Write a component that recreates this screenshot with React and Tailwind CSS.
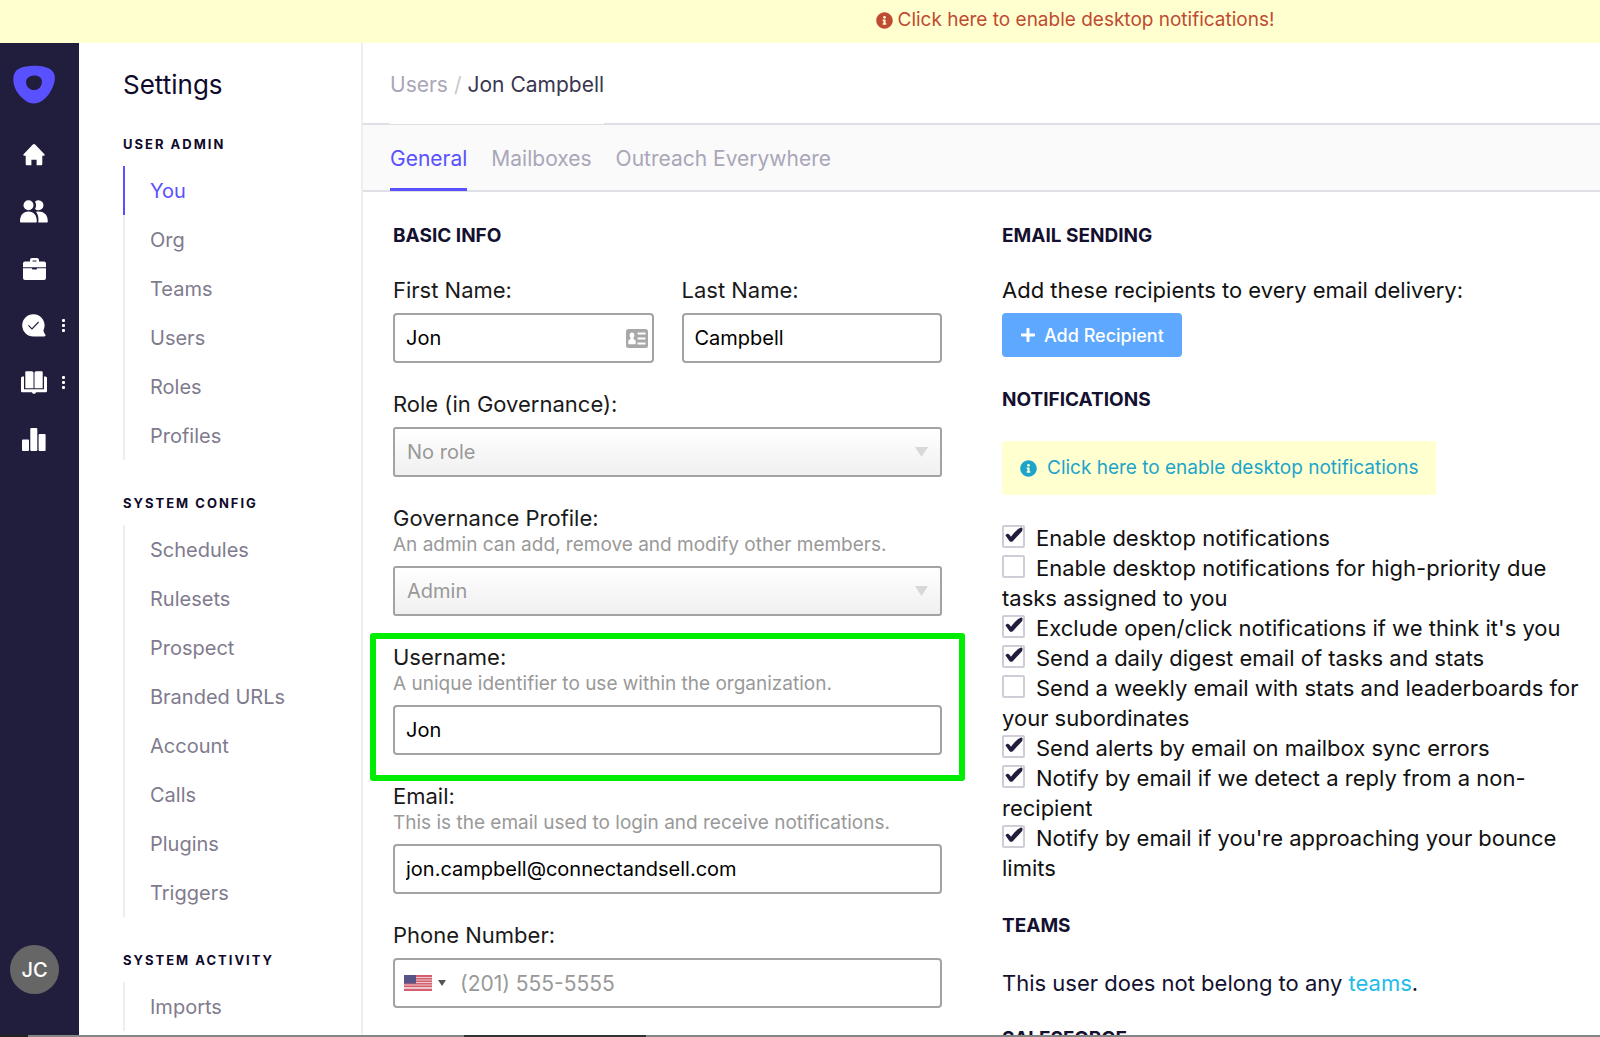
import { useState } from 'react';
import { FaInfoCircle, FaPlus } from 'react-icons/fa';

const navSections = [
  { title: 'User Admin', items: ['You', 'Org', 'Teams', 'Users', 'Roles', 'Profiles'] },
  {
    title: 'System Config',
    items: ['Schedules', 'Rulesets', 'Prospect', 'Branded URLs', 'Account', 'Calls', 'Plugins', 'Triggers'],
  },
  { title: 'System Activity', items: ['Imports'] },
];

const tabs = ['General', 'Mailboxes', 'Outreach Everywhere'];

const notificationOptions = [
  { id: 'desktop', label: 'Enable desktop notifications', on: true },
  { id: 'high-priority', label: 'Enable desktop notifications for high-priority due tasks assigned to you', on: false },
  { id: 'exclude-own', label: "Exclude open/click notifications if we think it's you", on: true },
  { id: 'daily', label: 'Send a daily digest email of tasks and stats', on: true },
  { id: 'weekly', label: 'Send a weekly email with stats and leaderboards for your subordinates', on: false },
  { id: 'sync-errors', label: 'Send alerts by email on mailbox sync errors', on: true },
  { id: 'non-recipient', label: 'Notify by email if we detect a reply from a non-recipient', on: true },
  { id: 'bounce', label: "Notify by email if you're approaching your bounce limits", on: true },
];

const inputClass =
  'block w-full h-[50px] rounded-[4px] border-2 border-[#a3a3a3] bg-white px-[11px] text-[20px] text-black focus:outline-none focus:border-[#5951ff]';

// Rail icons
const HomeIcon = () => (
  <svg width="22" height="22" viewBox="0 0 22 22" fill="#fff" aria-hidden="true">
    <path d="M9.6.8a2 2 0 0 1 2.8 0l8.8 9.1c.9 1 .5 1.9-.6 1.9h-1.3v8c0 1-.6 1.500-1.500 1.500h-4.200v-5.500H8.400v5.500H4.200c-.9 0-1.500-.5-1.500-1.500v-8H1.400c-1.100 0-1.500-.9-.6-1.900z" />
  </svg>
);

const PeopleIcon = () => (
  <svg width="28" height="23" viewBox="0 0 28 23" fill="#fff" aria-hidden="true">
    <circle cx="8.500" cy="5.300" r="5" />
    <path d="M0 21.300c0-6 3.200-9.800 8.500-9.800s8.300 3.800 8.300 9.800c0 .8-.4 1.200-1.100 1.200H1.100C.4 22.500 0 22.100 0 21.300z" />
    <path d="M15 1.700a5 5 0 1 1 0 7.200 7 7 0 0 0 0-7.200z" />
    <path d="M16 11.700c7-1 11.800 2.300 11.800 9.600 0 .8-.4 1.200-1.100 1.200h-8.400c.6-4.300-.1-8-2.300-10.800z" />
  </svg>
);

const BriefcaseIcon = () => (
  <svg width="23" height="22" viewBox="0 0 23 22" fill="#fff" aria-hidden="true">
    <path d="M7 3.500V2a2 2 0 0 1 2-2h5a2 2 0 0 1 2 2v1.500h5a2 2 0 0 1 2 2v3.800H0V5.500a2 2 0 0 1 2-2zm2.500 0h4V2.400h-4z" />
    <path d="M0 10.300h9v.5c0 .5.3.8.8.8h3.400c.5 0 .8-.3.8-.8v-.5h9V20a2 2 0 0 1-2 2H2a2 2 0 0 1-2-2z" />
  </svg>
);

const TaskIcon = () => (
  <svg width="24" height="23" viewBox="0 0 24 23" aria-hidden="true">
    <path d="M11.300.2a11.200 11.200 0 0 1 10.100 16.200c.3 1.600 1 2.800 1.900 4 .6.900.2 2-1 2H11.300a11.100 11.100 0 1 1 0-22.200z" fill="#fff" />
    <path d="M6.400 11.400l3.600 3.600 6.600-7" fill="none" stroke="#211d3c" strokeWidth="1.100" />
  </svg>
);

const BookIcon = () => (
  <svg width="26" height="23" viewBox="0 0 26 23" fill="#fff" aria-hidden="true">
    <path d="M0 7a1.500 1.500 0 0 1 1.500-1.500H3v12.800h20V5.500h1.500A1.500 1.500 0 0 1 26 7v13a1.200 1.200 0 0 1-1.200 1.200H15c-.3 1-1 1.600-2 1.600s-1.700-.6-2-1.600H1.200A1.200 1.200 0 0 1 0 20z" />
    <path d="M4.300 1.200Q4.300.3 5.200.3h5.600q1.700 0 1.700 1.500v15.400H4.300z" />
    <path d="M13.500 1.800q0-1.500 1.700-1.500h5.600q.9 0 .9.900v16h-8.200z" />
  </svg>
);

const ChartIcon = () => (
  <svg width="24" height="23" viewBox="0 0 24 23" fill="#fff" aria-hidden="true">
    <rect x="0" y="11.500" width="7" height="11.500" rx="1" />
    <rect x="8.300" y="0" width="7" height="23" rx="1" />
    <rect x="16.600" y="6" width="7" height="17" rx="1" />
  </svg>
);

const DotsIcon = () => (
  <svg width="3" height="14" viewBox="0 0 3 14" fill="#fff" aria-hidden="true">
    <rect y="0" width="3" height="3" rx="1" />
    <rect y="5" width="3" height="3" rx="1" />
    <rect y="10" width="3" height="3" rx="1" />
  </svg>
);

const railLinks = [
  { label: 'Home', Icon: HomeIcon },
  { label: 'Prospects', Icon: PeopleIcon },
  { label: 'Accounts', Icon: BriefcaseIcon },
  { label: 'Tasks', Icon: TaskIcon, more: true },
  { label: 'Library', Icon: BookIcon, more: true },
  { label: 'Reports', Icon: ChartIcon },
];

const Rail = () => (
  <nav aria-label="Main" className="flex w-[79px] shrink-0 flex-col bg-[#211d3c] pt-[22px]">
    <a href="#home" aria-label="Outreach" className="ml-[13px] block">
      <svg width="42" height="39" viewBox="0 0 42 39" aria-hidden="true">
        <path
          fillRule="evenodd"
          fill="#5951ff"
          d="M17 1C26 .2 34 1.800 38 4.800c4 3 4.600 7.700 3.300 12.700-2.200 8.500-7.500 15.500-13.300 19-5 2.800-11 2.700-16-1.300C4.500 29.500.3 22.500.3 14.500.3 6 5 1.800 17 1zM21 10.500c-4.600.2-7.900 2.700-7.900 6.700 0 4.500 3.600 7.800 7.900 7.800 4.500 0 7.900-3.500 7.900-8.300 0-4-3.200-6.400-7.900-6.200z"
        />
      </svg>
    </a>
    <ul className="mt-[22px] flex flex-col">
      {railLinks.map(({ label, Icon, more }) => (
        <li key={label}>
          <a href={`#${label.toLowerCase()}`} aria-label={label} className="flex h-[57px] items-center">
            <span className="flex w-[68px] justify-center">
              <Icon />
            </span>
            {more && <span className="absolute ml-[62px]"><DotsIcon /></span>}
          </a>
        </li>
      ))}
    </ul>
    <button
      type="button"
      className="mt-auto mb-[41px] ml-[10px] size-[49px] rounded-full bg-[#666] text-[20px] font-medium text-white"
    >
      JC
    </button>
  </nav>
);

const SettingsNav = () => (
  <aside className="w-[284px] shrink-0 overflow-hidden border-r-2 border-[#eee] pl-11">
    <h1 className="mt-[25px] text-[26px] leading-[34px] text-[#0f0a2b]">Settings</h1>
    {navSections.map((section, i) => (
      <section key={section.title} className={i === 0 ? 'mt-[30px]' : 'mt-[31px]'}>
        <h2 className="h-[34px] text-[13px] leading-[24px] font-bold tracking-[2px] text-[#0f0a2b] uppercase">
          {section.title}
        </h2>
        <ul>
          {section.items.map((item) => (
            <li key={item}>
              <a
                href={`#${item.toLowerCase().replace(' ', '-')}`}
                className={`flex h-[49px] items-center border-l-2 pt-px pl-[25px] text-[20px] ${
                  item === 'You' ? 'border-[#5951ff] text-[#5951ff]' : 'border-[#eee] text-[#7f7b8e]'
                }`}
              >
                {item}
              </a>
            </li>
          ))}
        </ul>
      </section>
    ))}
  </aside>
);

const Field = ({ id, label, help, highlight, children }) => (
  <div className="relative mb-[27px]">
    <label htmlFor={id} className="block text-[22px] leading-[28px] text-[#1a1a1a]">
      {label}
    </label>
    {help && <p className="text-[19px] leading-[25px] text-[#999]">{help}</p>}
    <div className="relative mt-[9px]">{children}</div>
    {highlight && (
      <div className="pointer-events-none absolute -inset-x-[23px] -top-[10px] -bottom-[26px] rounded-[3px] border-[6px] border-[#00ec00]" />
    )}
  </div>
);

const DisabledSelect = ({ id, value }) => (
  <>
    <select
      id={id}
      disabled
      className="block h-[50px] w-full appearance-none rounded-[3px] border-2 border-[#a3a3a3] bg-linear-to-b from-white to-[#f0f0f0] px-3 text-[20px] text-[#999] opacity-100"
    >
      <option>{value}</option>
    </select>
    <svg className="absolute top-5 right-[14px]" width="13" height="10" viewBox="0 0 13 10" aria-hidden="true">
      <path d="M0 0h13L6.500 10z" fill="#d8d8d8" />
    </svg>
  </>
);

const ContactCardIcon = () => (
  <svg className="absolute top-4 right-[6px]" width="22" height="19" viewBox="0 0 22 19" aria-hidden="true">
    <rect width="22" height="19" rx="2.500" fill="#a8a8a8" />
    <g fill="#fff">
      <path d="M6 3.500c1.500 0 2.400 1.100 2.400 2.700 0 1-.4 2-1 2.500v1.200c1.400.5 2.300 1 2.300 2.600v2.700H2.300v-2.700c0-1.600.9-2.100 2.300-2.600V8.700c-.6-.5-1-1.500-1-2.500 0-1.600.9-2.700 2.400-2.700z" />
      <rect x="11.500" y="3.500" width="8" height="2" />
      <rect x="11.500" y="8.500" width="8" height="2" />
      <rect x="11.500" y="13.500" width="8" height="2" />
    </g>
  </svg>
);

const UsFlag = () => (
  <svg width="28" height="16" viewBox="0 0 28 16" aria-hidden="true">
    <rect width="28" height="16" fill="#efc6cc" />
    <g fill="#d4606f">
      <rect width="28" height="2" />
      <rect y="3" width="28" height="1.500" />
      <rect y="5.500" width="28" height="1.500" />
      <rect y="8" width="28" height="1.500" />
      <rect y="10.500" width="28" height="1.500" />
      <rect y="14" width="28" height="2" />
    </g>
    <rect width="12" height="8.500" fill="#575487" />
  </svg>
);

const SectionTitle = ({ children }) => (
  <h3 className="text-[19px] leading-[28px] font-bold text-[#14102f] uppercase">{children}</h3>
);

const BasicInfo = () => (
  <form className="w-[549px] shrink-0" onSubmit={(e) => e.preventDefault()}>
    <SectionTitle>Basic Info</SectionTitle>
    <div className="mt-[26px] grid grid-cols-2 gap-x-7">
      <Field id="first-name" label="First Name:">
        <input id="first-name" type="text" defaultValue="Jon" className={inputClass} />
        <ContactCardIcon />
      </Field>
      <Field id="last-name" label="Last Name:">
        <input id="last-name" type="text" defaultValue="Campbell" className={inputClass} />
      </Field>
    </div>
    <Field id="role" label="Role (in Governance):">
      <DisabledSelect id="role" value="No role" />
    </Field>
    <Field id="profile" label="Governance Profile:" help="An admin can add, remove and modify other members.">
      <DisabledSelect id="profile" value="Admin" />
    </Field>
    <Field id="username" label="Username:" help="A unique identifier to use within the organization." highlight>
      <input id="username" type="text" defaultValue="Jon" className={inputClass} />
    </Field>
    <Field id="email" label="Email:" help="This is the email used to login and receive notifications.">
      <input id="email" type="email" defaultValue="jon.campbell@connectandsell.com" className={inputClass} />
    </Field>
    <Field id="phone" label="Phone Number:">
      <div className="flex h-[50px] items-center rounded-[4px] border-2 border-[#a3a3a3] pl-[9px]">
        <button type="button" aria-label="Country: United States" className="flex items-center gap-[6px]">
          <UsFlag />
          <svg width="8" height="6" viewBox="0 0 8 6" aria-hidden="true">
            <path d="M0 0h8L4 6z" fill="#555" />
          </svg>
        </button>
        <input
          id="phone"
          type="tel"
          placeholder="(201) 555-5555"
          className="h-full min-w-0 flex-1 pl-[14px] text-[21px] placeholder:text-[#999] focus:outline-none"
        />
      </div>
    </Field>
  </form>
);

const NotificationOption = ({ option }) => {
  const [checked, setChecked] = useState(option.on);

  return (
    <li className="relative">
      <input
        id={option.id}
        type="checkbox"
        checked={checked}
        onChange={(e) => setChecked(e.target.checked)}
        className="mr-[11px] inline-block size-[23px] appearance-none rounded-[2px] border-2 border-[#cfcdd8] bg-white align-[-2px]"
      />
      {checked && (
        <svg className="pointer-events-none absolute top-[4px] left-[3px]" width="18" height="16" viewBox="0 0 18 16" aria-hidden="true">
          <path
            d="M.4 8.200C1 7.400 2 6.700 3 6.700c1.200.3 2.200 1.700 3 3.100C9 5.500 12 2.400 15.500.7c.9-.4 1.700-.1 1.900.6.200.9.100 2.100-.4 2.900L8 13.900c-1.100 1.200-2.700 1.200-3.600 0z"
            fill="#211d3c"
          />
        </svg>
      )}
      <label htmlFor={option.id}>{option.label}</label>
    </li>
  );
};

const SidePanel = () => (
  <div className="min-w-0 flex-1 text-[22px] text-[#111]">
    <SectionTitle>Email Sending</SectionTitle>
    <p className="mt-[26px] leading-[28px]">Add these recipients to every email delivery:</p>
    <button
      type="button"
      className="mt-[9px] flex h-[44px] items-center gap-2 rounded-[4px] bg-[#5ea9ff] px-[18px] text-[18px] font-medium text-white"
    >
      <FaPlus size={16} />
      Add Recipient
    </button>

    <div className="mt-[29px]">
      <SectionTitle>Notifications</SectionTitle>
    </div>
    <a
      href="#enable"
      className="mt-[27px] flex h-[54px] w-fit items-center gap-[10px] rounded-[4px] bg-[#ffffcf] px-[18px] text-[19px] text-[#1ca5cc]"
    >
      <FaInfoCircle size={17} />
      Click here to enable desktop notifications
    </a>
    <ul className="mt-[28px] leading-[30px]">
      {notificationOptions.map((option) => (
        <NotificationOption key={option.id} option={option} />
      ))}
    </ul>

    <div className="mt-[29px]">
      <SectionTitle>Teams</SectionTitle>
    </div>
    <p className="mt-[29px] leading-[28px] text-[#14102f]">
      This user does not belong to any <a href="#teams" className="text-[#22bce8]">teams</a>.
    </p>
    <div className="mt-[28px]">
      <SectionTitle>Salesforce</SectionTitle>
    </div>
  </div>
);

export default function App() {
  const [activeTab, setActiveTab] = useState('General');

  return (
    <div className="flex h-screen flex-col overflow-hidden bg-white font-['Inter','Liberation_Sans',sans-serif]">
      <a
        href="#enable"
        className="flex h-[43px] shrink-0 items-center justify-center gap-[5px] bg-[#ffffcf] pb-[2px] pl-[550px] text-[19px] text-[#bf4b33]"
      >
        <FaInfoCircle size={17} />
        Click here to enable desktop notifications!
      </a>
      <div className="flex min-h-0 flex-1">
        <Rail />
        <SettingsNav />
        <main className="min-w-0 flex-1 overflow-hidden">
          <header className="flex h-[82px] border-b-2 border-[#dfdfe6] pl-[27px]">
            <div className="-mb-[1px] flex h-[81px] items-center gap-[6px] bg-white pt-[2px] text-[21px] text-[#a9a6b8]">
              <a href="#users">Users</a>
              <span className="text-[#c9c7d1]">/</span>
              <span className="text-[#3a3650]">Jon Campbell</span>
            </div>
          </header>
          <div role="tablist" className="flex h-[67px] gap-6 border-b-2 border-[#dfdfe6] bg-[#fafafa] pl-[27px]">
            {tabs.map((tab) => (
              <button
                key={tab}
                type="button"
                role="tab"
                aria-selected={activeTab === tab}
                onClick={() => setActiveTab(tab)}
                className={`-mb-px border-b-3 pt-1 text-[21px] ${
                  activeTab === tab ? 'border-[#5951ff] text-[#5951ff]' : 'border-transparent text-[#a9a6b8]'
                }`}
              >
                {tab}
              </button>
            ))}
          </div>
          <div className="flex gap-[60px] pt-[30px] pr-5 pl-[30px]">
            <BasicInfo />
            <SidePanel />
          </div>
        </main>
      </div>
      <div className="flex h-[2px] shrink-0 bg-[#858585]">
        <div className="w-7 bg-[#222]" />
        <div className="ml-[436px] w-[182px] bg-[#333]" />
      </div>
    </div>
  );
}
